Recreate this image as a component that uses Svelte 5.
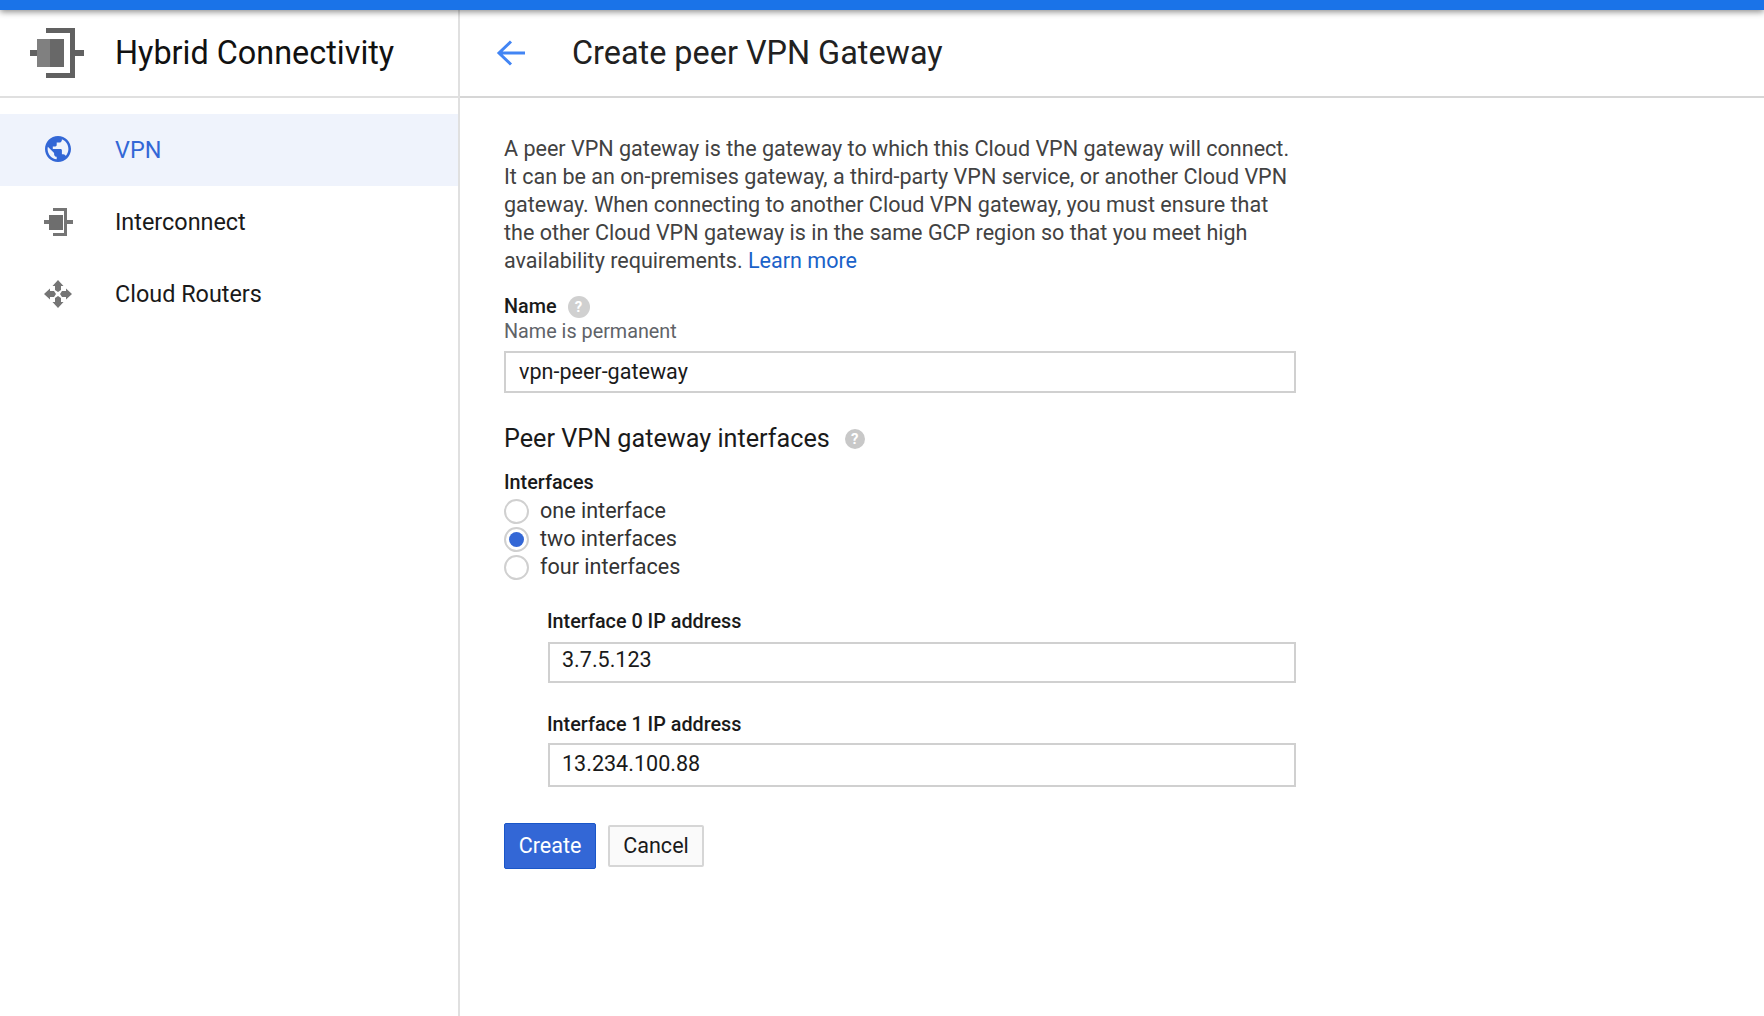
<script>
  let name = "vpn-peer-gateway";
  const options = ["one interface", "two interfaces", "four interfaces"];
  let picked = "two interfaces";
</script>

<div class="topbar"></div>
<div class="page">
  <aside class="side">
    <div class="product">
      <svg class="logo" width="54" height="50" viewBox="0 0 54 50">
        <path fill="#616161" d="M16 0h29v22h9v6h-9v22H16v-5h24V5H16z" />
        <rect y="22" width="7" height="6" fill="#616161" />
        <rect x="7" y="11" width="13" height="28" fill="#808080" />
        <rect x="20" y="11" width="14" height="28" fill="#686868" />
      </svg>
      <span>Hybrid Connectivity</span>
    </div>
    <nav>
      <div class="item active">
        <span class="ic globe">
          <svg width="26" height="26" viewBox="2 2 20 20"><path fill="#3367d6" d="M12 2C6.48 2 2 6.48 2 12s4.48 10 10 10 10-4.48 10-10S17.52 2 12 2zm-1 17.93c-3.95-.49-7-3.85-7-7.93 0-.62.08-1.21.21-1.79L9 15v1c0 1.1.9 2 2 2v1.93zm6.900-2.540c-.26-.81-1-1.390-1.900-1.390h-1v-3c0-.55-.45-1-1-1H8v-2h2c.55 0 1-.45 1-1V7h2c1.100 0 2-.9 2-2v-.41c2.930 1.190 5 4.060 5 7.410 0 2.080-.8 3.970-2.100 5.390z" /></svg>
        </span>
        VPN
      </div>
      <div class="item">
        <span class="ic">
          <svg width="29" height="28" viewBox="0 0 29 28">
            <path fill="#757575" d="M9 0h14v12h6v4h-6v12H9v-3h11V3H9z" />
            <rect y="12" width="5" height="4" fill="#757575" />
            <rect x="5" y="7" width="14" height="15" fill="#6e6e6e" />
          </svg>
        </span>
        Interconnect
      </div>
      <div class="item">
        <span class="ic">
          <svg width="28" height="28" viewBox="0 0 28 28">
            <g fill="#757575">
              <path d="M14 0l5.500 6H17v4l-3 2-3-2V6H8.500z" />
              <path d="M14 28l-5.500-6H11v-4l3-2 3 2v4h2.500z" />
              <path d="M0 14l6-5.500V11h4l2 3-2 3H6v2.500z" />
              <path d="M28 14l-6 5.500V17h-4l-2-3 2-3h4V8.500z" />
            </g>
          </svg>
        </span>
        Cloud Routers
      </div>
    </nav>
  </aside>

  <main class="main">
    <header class="head">
      <svg class="back" width="30" height="28" viewBox="0 0 30 28">
        <path fill="none" stroke="#4285f4" stroke-width="3" d="M29 14H4M15 2.500L3 14l12 11.500" />
      </svg>
      <h1>Create peer VPN Gateway</h1>
    </header>

    <form class="form">
      <p class="intro">
        A peer VPN gateway is the gateway to which this Cloud VPN gateway will connect.<br />
        It can be an on-premises gateway, a third-party VPN service, or another Cloud VPN<br />
        gateway. When connecting to another Cloud VPN gateway, you must ensure that<br />
        the other Cloud VPN gateway is in the same GCP region so that you meet high<br />
        availability requirements. <a href="#top">Learn more</a>
      </p>

      <div class="label name-label">Name <span class="help small">?</span></div>
      <div class="hint">Name is permanent</div>
      <input class="field" bind:value={name} />

      <h2>Peer VPN gateway interfaces <span class="help">?</span></h2>

      <div class="label">Interfaces</div>
      <div class="radios">
        {#each options as opt}
          <label class="radio">
            <input type="radio" bind:group={picked} value={opt} />
            <span class="dot"></span>
            {opt}
          </label>
        {/each}
      </div>

      <div class="nested">
        <div class="label">Interface 0 IP address</div>
        <input class="field ip0" value="3.7.5.123" />
        <div class="label ip-label">Interface 1 IP address</div>
        <input class="field ip1" value="13.234.100.88" />
      </div>

      <div class="actions">
        <button type="button" class="primary">Create</button>
        <button type="button" class="ghost">Cancel</button>
      </div>
    </form>
  </main>
</div>

<style>
  :global(body) {
    margin: 0;
    background: #fff;
    font-family: Roboto, "Liberation Sans", sans-serif;
    overflow: hidden;
  }
  .topbar {
    position: relative;
    z-index: 2;
    height: 10px;
    background: #1a73e8;
    box-shadow: 0 2px 6px rgba(0, 0, 0, 0.45);
  }
  .page {
    display: flex;
    height: 1006px;
  }
  .side {
    width: 458px;
    flex: none;
    border-right: 2px solid #e0e0e0;
  }
  .product {
    display: flex;
    align-items: center;
    height: 86px;
    border-bottom: 2px solid #e0e0e0;
    font-size: 32.400px;
    color: #111;
  }
  .logo {
    margin: 0 0 0 30px;
    width: 54px;
    flex: none;
  }
  .product span {
    margin-left: 31px;
  }
  nav {
    padding-top: 16px;
  }
  .item {
    display: flex;
    align-items: center;
    height: 72px;
    font-size: 23.400px;
    color: #1a1a1a;
  }
  .item.active {
    background: #eff3fc;
    color: #3367d6;
  }
  .ic {
    display: flex;
    justify-content: center;
    width: 58px;
    margin-left: 29px;
    margin-right: 28px;
  }
  .globe {
    margin-top: -2px;
  }
  .main {
    flex: 1;
    min-width: 0;
  }
  .head {
    display: flex;
    align-items: center;
    height: 86px;
    border-bottom: 2px solid #d6d6d6;
  }
  .back {
    margin-left: 36px;
    flex: none;
  }
  h1 {
    margin: 0 0 0 46px;
    font-size: 32.400px;
    font-weight: 400;
    color: #212121;
  }
  .form {
    width: 792px;
    padding: 37px 0 0 44px;
  }
  .intro {
    margin: 0;
    font-size: 21.560px;
    line-height: 28px;
    color: #424242;
  }
  a {
    color: #1a62c9;
    text-decoration: none;
  }
  .label {
    font-size: 19.800px;
    font-weight: 500;
    color: #1a1a1a;
    line-height: 24px;
  }
  .name-label {
    margin-top: 20px;
    display: flex;
    align-items: center;
    gap: 11px;
  }
  .hint {
    font-size: 19.800px;
    line-height: 26px;
    color: #5f6368;
  }
  .field {
    box-sizing: border-box;
    display: block;
    width: 100%;
    height: 42px;
    margin-top: 6px;
    padding: 0 13px 1px;
    border: 2px solid #d0d0d0;
    border-radius: 0;
    outline: none;
    font: 400 21.560px Roboto, sans-serif;
    color: #1a1a1a;
  }
  h2 {
    display: flex;
    align-items: center;
    gap: 15px;
    margin: 29px 0 0;
    font-size: 25.200px;
    font-weight: 400;
    line-height: 34px;
    color: #1a1a1a;
  }
  h2 + .label {
    margin-top: 15px;
  }
  .help {
    display: inline-flex;
    align-items: center;
    justify-content: center;
    width: 20px;
    height: 20px;
    border-radius: 50%;
    background: #c8c8c8;
    color: #fff;
    font-size: 15px;
    font-weight: 700;
  }
  .help.small {
    width: 22px;
    height: 22px;
    background: #d0d0d0;
  }
  .radios {
    display: flex;
    flex-direction: column;
    margin-top: 1px;
  }
  .radio {
    display: flex;
    align-items: center;
    height: 28px;
    font-size: 21.560px;
    color: #333;
  }
  .radio input {
    position: absolute;
    opacity: 0;
    width: 0;
    height: 0;
  }
  .dot {
    box-sizing: border-box;
    display: flex;
    align-items: center;
    justify-content: center;
    width: 25px;
    height: 25px;
    margin: 2px 11px 0 0;
    border: 2px solid #d0d0d0;
    border-radius: 50%;
    background: #fff;
  }
  .radio input:checked + .dot::after {
    content: "";
    width: 15px;
    height: 15px;
    border-radius: 50%;
    background: #3367d6;
  }
  .nested {
    margin: 30px 0 0 44px;
  }
  .nested .label {
    margin-left: -1px;
  }
  .ip0 {
    height: 41px;
    margin-top: 8px;
    padding: 0 12px 6px;
  }
  .ip-label {
    margin-top: 30px;
  }
  .ip1 {
    height: 44px;
    margin-top: 6px;
    padding: 0 12px 4px;
  }
  .actions {
    display: flex;
    align-items: center;
    gap: 12px;
    margin-top: 36px;
  }
  button {
    box-sizing: border-box;
    font: 400 21.560px Roboto, sans-serif;
    border-radius: 2px;
    padding: 0 0 2px;
  }
  .primary {
    width: 92px;
    height: 46px;
    background: #3367d6;
    border: 1px solid #1a56c8;
    color: #fff;
  }
  .ghost {
    width: 96px;
    height: 42px;
    background: #fafafa;
    border: 2px solid #d6d6d6;
    color: #1a1a1a;
  }
</style>
